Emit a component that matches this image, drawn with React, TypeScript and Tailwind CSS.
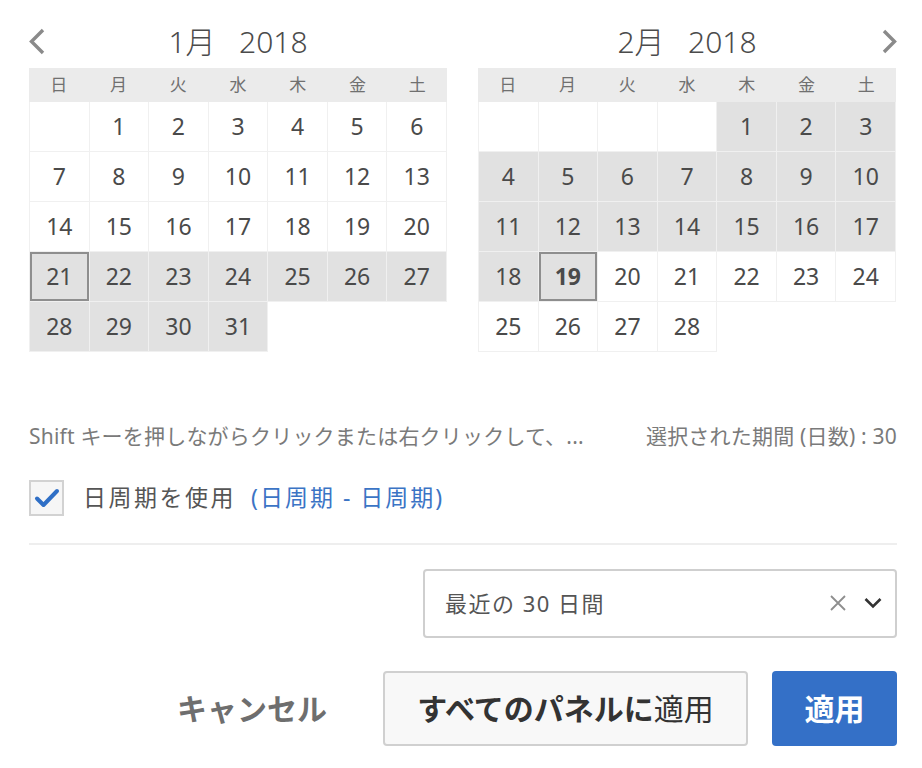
import { type ReactNode } from "react";

const FONT = { fontFamily: '"Noto Sans", "Noto Sans CJK JP", sans-serif' };
const WEEK = ["日", "月", "火", "水", "木", "金", "土"];

interface DayCell {
  day?: number;
  selected?: boolean;
  outlined?: boolean;
  bold?: boolean;
}

const buildMonth = (
  offset: number,
  days: number,
  isSelected: (d: number) => boolean,
  outlined: number,
  bold?: number
): DayCell[] => {
  const cells: DayCell[] = [];
  for (let i = 0; i < offset; i++) cells.push({});
  for (let d = 1; d <= days; d++) {
    cells.push({
      day: d,
      selected: isSelected(d),
      outlined: d === outlined,
      bold: d === bold,
    });
  }
  return cells;
};

const january = buildMonth(1, 31, (d) => d >= 21, 21);
const february = buildMonth(4, 28, (d) => d <= 19, 19, 19);

const Chevron = ({ dir }: { dir: "left" | "right" }) => (
  <svg width="18" height="27" viewBox="0 0 18 27" fill="none">
    <path
      d={dir === "left" ? "M15 2 L3.5 13.5 L15 25" : "M4 3 L14.5 13.5 L4 24"}
      stroke="#8a8a8a"
      strokeWidth="3.4"
    />
  </svg>
);

const Month = ({
  title,
  cells,
  nav,
}: {
  title: string;
  cells: DayCell[];
  nav?: ReactNode;
}) => (
  <div className="flex w-[418px] flex-col">
    <div className="relative flex h-[68px] items-center justify-center pt-[14px]">
      {nav}
      <span className="whitespace-pre text-[30px] font-light text-[#4b4b4b]">{title}</span>
    </div>
    <div className="grid h-[34px] grid-cols-7 bg-[#ebebeb]">
      {WEEK.map((w) => (
        <div key={w} className="flex items-center justify-center text-[17px] text-[#707070]">
          {w}
        </div>
      ))}
    </div>
    <div className="grid grid-cols-7 border-l border-[#f0f0f0]">
      {cells.map((c, i) => (
        <div
          key={i}
          className={`flex h-[50px] items-center justify-center border-r border-b border-[#f0f0f0] text-[23px] text-[#4a4a4a] ${
            c.selected ? "bg-[#e1e1e1]" : "bg-white"
          } ${c.outlined ? "shadow-[inset_0_0_0_2px_#8e8e8e]" : ""} ${
            c.bold ? "font-bold text-[#3c3c3c]" : ""
          } ${i % 7 === 0 ? "-ml-px border-l" : ""}`}
        >
          {c.day}
        </div>
      ))}
    </div>
  </div>
);

export default function App() {
  return (
    <div className="h-[768px] w-[922px] bg-white pl-[29px] pr-[25px]" style={FONT}>
      <div className="flex gap-[31px]">
        <Month
          title="1月   2018"
          cells={january}
          nav={
            <span className="absolute left-[-1px] top-[28px]">
              <Chevron dir="left" />
            </span>
          }
        />
        <Month
          title="2月   2018"
          cells={february}
          nav={
            <span className="absolute right-[-2px] top-[28px]">
              <Chevron dir="right" />
            </span>
          }
        />
      </div>

      <div className="mt-[69px] flex items-center justify-between text-[21px] tracking-[0.2px] text-[#7a7a7a]">
        <span>Shift キーを押しながらクリックまたは右クリックして、...</span>
        <span>選択された期間 (日数) : 30</span>
      </div>

      <div className="mt-[27px] flex items-center gap-[19px]">
        <div className="flex h-[36px] w-[35px] items-center justify-center border-2 border-[#d2d2d2] bg-[#f6f6f6]">
          <svg width="26" height="20" viewBox="0 0 26 20" fill="none">
            <path d="M3 10.5 L9.5 17 L23 3" stroke="#2f6fc6" strokeWidth="4" strokeLinecap="round" strokeLinejoin="round" />
          </svg>
        </div>
        <span className="text-[23px] tracking-[2.5px] text-[#555]">日周期を使用</span>
        <span className="-ml-[4px] text-[23px] tracking-[2px] text-[#3b74c5]">(日周期 - 日周期)</span>
      </div>

      <div className="mt-[27px] h-[2px] bg-[#eeeeee]" />

      <div className="mt-[24px] flex justify-end">
        <div className="flex h-[69px] w-[474px] items-center rounded-[4px] border-2 border-[#cfcfcf] pl-[20px] pr-[12px]">
          <span className="flex-1 text-[22px] tracking-[1.5px] text-[#555]">最近の 30 日間</span>
          <svg width="18" height="18" viewBox="0 0 18 18" fill="none">
            <path d="M2 2 L16 16 M16 2 L2 16" stroke="#8e8e8e" strokeWidth="1.8" />
          </svg>
          <svg className="ml-[16px]" width="20" height="14" viewBox="0 0 20 14" fill="none">
            <path d="M2.5 3 L10 10.5 L17.5 3" stroke="#333" strokeWidth="2.6" />
          </svg>
        </div>
      </div>

      <div className="mt-[33px] flex items-center justify-end">
        <span className="mr-[56px] text-[30px] font-bold text-[#6e6e6e]">キャンセル</span>
        <button className="flex h-[75px] w-[365px] items-center justify-center rounded-[4px] border-2 border-[#d0d0d0] bg-[#f8f8f8] text-[30px] font-bold text-[#333]">
          すべてのパネルに<span className="font-normal">適用</span>
        </button>
        <button className="ml-[24px] flex h-[75px] w-[125px] items-center justify-center rounded-[4px] bg-[#3470c7] text-[30px] font-bold text-white">
          適用
        </button>
      </div>
    </div>
  );
}
